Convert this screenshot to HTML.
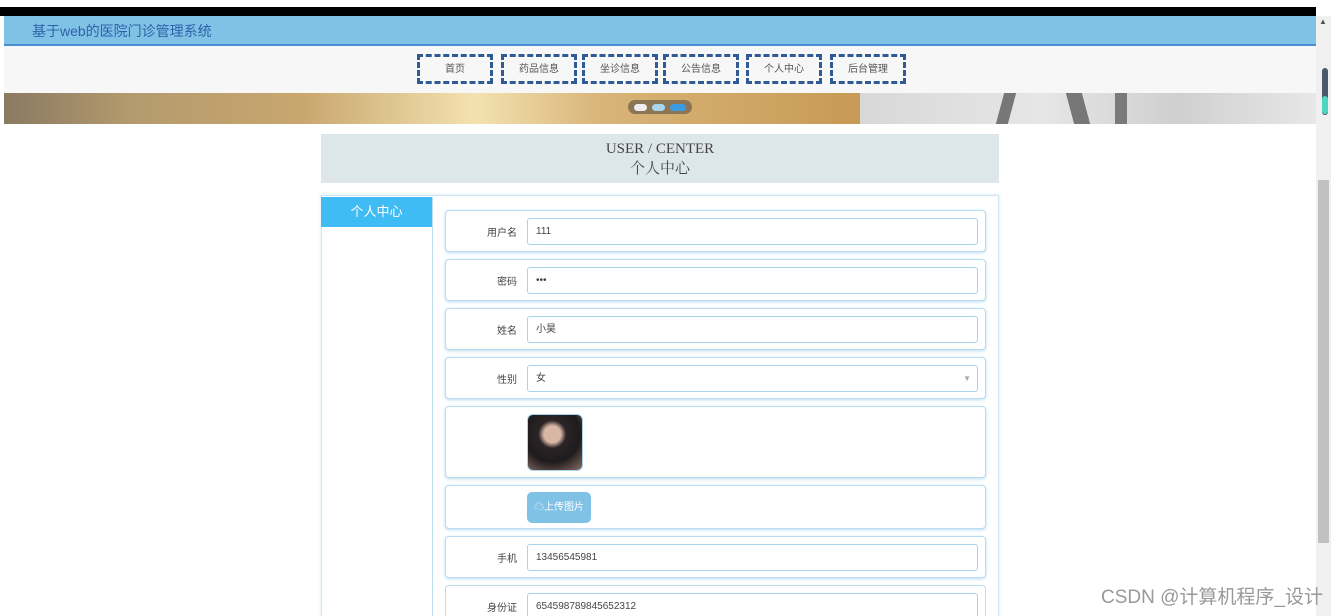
<!DOCTYPE html>
<html><head><meta charset="utf-8"><style>
*{margin:0;padding:0;box-sizing:border-box}
html,body{width:1338px;height:616px;overflow:hidden}
body{background:#fff;position:relative;font-family:"Liberation Sans","Noto Sans CJK SC",sans-serif}
.a{position:absolute}
.nav{position:absolute;top:54px;height:30px;border:3px dashed #2e5b95;font-size:10px;color:#555;text-align:center;line-height:26px;background:#f7f7f7}
.row{position:absolute;left:445px;width:541px;border:1px solid #b9dcf0;border-radius:4px;box-shadow:0 1px 3px #b9dcf0;background:#fff}
.lab{position:absolute;right:468px;font-size:10px;color:#444;text-align:right}
.inp{position:absolute;left:81px;width:451px;height:27px;border:1px solid #a9d3ec;border-radius:3px;font-size:10px;color:#444;padding-left:8px;line-height:25px}
</style></head><body>
<div class="a" style="left:0;top:7px;width:1316px;height:9px;background:#000"></div>
<div class="a" style="left:4px;top:16px;width:1312px;height:30px;background:#80c1e6;border-bottom:2px solid #4a8fcf"></div>
<div class="a" style="left:32px;top:21px;font-size:14px;color:#2e62a8">基于web的医院门诊管理系统</div>
<div class="a" style="left:4px;top:46px;width:1312px;height:47px;background:#f7f7f7"></div>
<div class="nav" style="left:417px;width:76px">首页</div>
<div class="nav" style="left:501px;width:76px">药品信息</div>
<div class="nav" style="left:582px;width:76px">坐诊信息</div>
<div class="nav" style="left:663px;width:76px">公告信息</div>
<div class="nav" style="left:746px;width:76px">个人中心</div>
<div class="nav" style="left:830px;width:76px">后台管理</div>
<div class="a" style="left:4px;top:93px;width:856px;height:31px;background:linear-gradient(90deg,#8a7a62 0%,#b49a6e 15%,#c9a76e 35%,#f3e2b0 55%,#d8b478 70%,#c79a55 100%)"></div>
<div class="a" style="left:860px;top:93px;width:456px;height:31px;background:linear-gradient(90deg,#d8d8d8,#e6e6e6 40%,#cfcfcf 70%,#e8e8e8)"></div>
<div class="a" style="left:1000px;top:93px;width:12px;height:31px;background:#777;transform:skewX(-15deg)"></div>
<div class="a" style="left:1070px;top:93px;width:16px;height:31px;background:#777;transform:skewX(15deg)"></div>
<div class="a" style="left:1115px;top:93px;width:12px;height:31px;background:#7a7a7a"></div>
<div class="a" style="left:628px;top:100px;width:64px;height:14px;background:#8a7655;border-radius:7px"></div>
<div class="a" style="left:634px;top:104px;width:13px;height:7px;background:#eee;border-radius:4px"></div>
<div class="a" style="left:652px;top:104px;width:13px;height:7px;background:#a9d5ef;border-radius:4px"></div>
<div class="a" style="left:670px;top:104px;width:16px;height:7px;background:#3a9be0;border-radius:4px"></div>
<div class="a" style="left:321px;top:134px;width:678px;height:49px;background:#dde7ea;text-align:center;font-family:'Liberation Serif','Noto Serif CJK SC',serif;color:#444;font-size:15px;line-height:20px;padding-top:5px">USER / CENTER<br>个人中心</div>
<div class="a" style="left:321px;top:195px;width:678px;height:421px;border:1px solid #cfe6f4;border-bottom:none;box-shadow:0 0 3px #cfe6f4"></div>
<div class="a" style="left:321px;top:197px;width:112px;height:419px;border-right:1px solid #b9dcf0"></div>
<div class="a" style="left:321px;top:197px;width:111px;height:30px;background:#3fbcf4;color:#fff;font-size:13px;text-align:center;line-height:30px">个人中心</div>
<div class="row" style="top:210px;height:42px"><span class="lab" style="top:13px">用户名</span><div class="inp" style="top:7px">111</div></div>
<div class="row" style="top:259px;height:42px"><span class="lab" style="top:13px">密码</span><div class="inp" style="top:7px">•••</div></div>
<div class="row" style="top:308px;height:42px"><span class="lab" style="top:13px">姓名</span><div class="inp" style="top:7px">小昊</div></div>
<div class="row" style="top:357px;height:42px"><span class="lab" style="top:13px">性别</span><div class="inp" style="top:7px">女<span style="position:absolute;right:6px;top:0;color:#aaa;font-size:8px">▼</span></div></div>
<div class="row" style="top:406px;height:72px"><div class="a" style="left:81px;top:7px;width:56px;height:57px;border-radius:6px;border:1px solid #a9d3ec;background:radial-gradient(circle at 45% 35%,#d9b7a6 0 18%,#2a2426 30%,#1f1b1c 60%,#8a6f66 100%)"></div></div>
<div class="row" style="top:485px;height:44px"><div class="a" style="left:81px;top:6px;width:64px;height:31px;border-radius:5px;background:#80c1e6;color:#fff;font-size:10px;line-height:31px;text-align:center">☁上传图片</div></div>
<div class="row" style="top:536px;height:42px"><span class="lab" style="top:13px">手机</span><div class="inp" style="top:7px">13456545981</div></div>
<div class="row" style="top:585px;height:31px;border-bottom:none;border-radius:4px 4px 0 0;box-shadow:none"><span class="lab" style="top:13px">身份证</span><div class="inp" style="top:7px;height:24px;border-bottom:none;border-radius:3px 3px 0 0">654598789845652312</div></div>
<div class="a" style="left:1316px;top:16px;width:15px;height:600px;background:#f0f0f0"></div>
<div class="a" style="left:1318px;top:180px;width:11px;height:363px;background:#c1c1c1"></div>
<div class="a" style="left:1322px;top:68px;width:6px;height:47px;background:#4a5a6a;border-radius:3px"></div>
<div class="a" style="left:1322px;top:96px;width:6px;height:18px;background:#4fd6c0;border-radius:3px"></div>
<div class="a" style="left:1319px;top:17px;font-size:8px;color:#555">▲</div>
<div class="a" style="left:1101px;top:586px;font-size:19px;line-height:24px;color:#999;white-space:nowrap">CSDN @计算机程序_设计</div>
</body></html>
